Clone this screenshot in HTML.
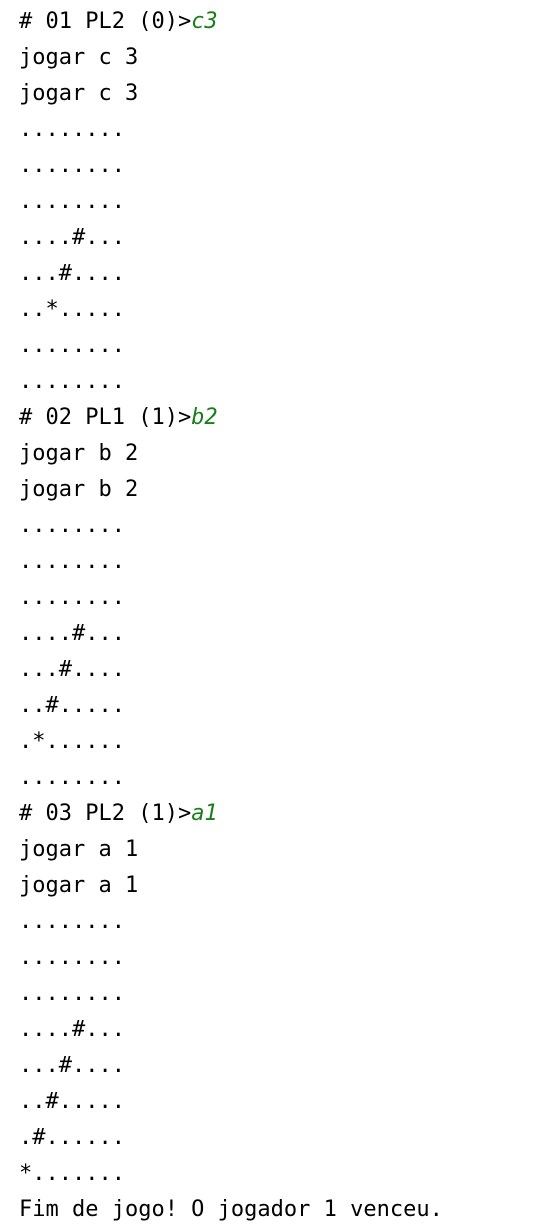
<!DOCTYPE html>
<html><head><meta charset="utf-8"><style>
html,body{margin:0;padding:0;background:#fff;}
body{width:552px;height:1229px;overflow:hidden;}
pre{margin:0;padding:4px 0 0 19px;font-family:"DejaVu Sans Mono","Liberation Mono",monospace;font-size:22px;line-height:36px;color:#000;}
i{color:#1a7f1a;font-style:italic;}
</style></head><body><pre># 01 PL2 (0)&gt;<i>c3</i>
jogar c 3
jogar c 3
........
........
........
....#...
...#....
..*.....
........
........
# 02 PL1 (1)&gt;<i>b2</i>
jogar b 2
jogar b 2
........
........
........
....#...
...#....
..#.....
.*......
........
# 03 PL2 (1)&gt;<i>a1</i>
jogar a 1
jogar a 1
........
........
........
....#...
...#....
..#.....
.#......
*.......
Fim de jogo! O jogador 1 venceu.</pre></body></html>
